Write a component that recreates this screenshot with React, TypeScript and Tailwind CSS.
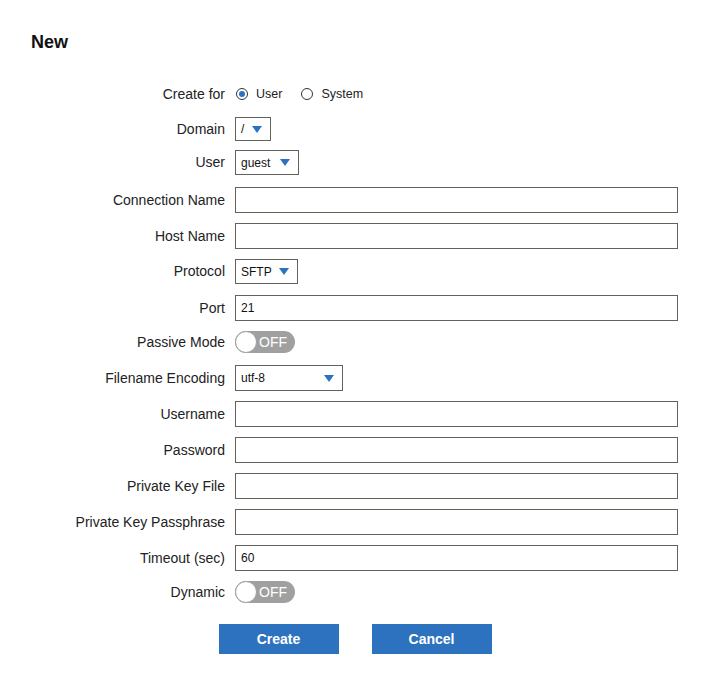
import React from "react"

function Caret() {
  return (
    <svg width="10" height="7" viewBox="0 0 10 7" className="shrink-0">
      <path d="M0 0 H10 L5 7 Z" fill="#2b72c0" />
    </svg>
  )
}

function Row({ label, className = "", children }: { label: string; className?: string; children: React.ReactNode }) {
  return (
    <div className={"flex items-center " + className}>
      <div className="w-[194px] shrink-0 text-right text-[14px] text-[#222]">{label}</div>
      <div className="ml-[10px] flex flex-1 items-center">{children}</div>
    </div>
  )
}

function TextBox({ value = "" }: { value?: string }) {
  return (
    <div className="flex h-[26px] w-full items-center border border-[#62625a] bg-white pl-[5px] text-[12px] text-[#111]">
      {value}
    </div>
  )
}

function Select({ value, width, height = "h-[25px]" }: { value: string; width: string; height?: string }) {
  return (
    <div className={"flex items-center justify-between border border-[#62625a] bg-white pl-[5px] pr-[8px] text-[12px] text-[#111] " + width + " " + height}>
      <span>{value}</span>
      <Caret />
    </div>
  )
}

function Toggle() {
  return (
    <div className="flex h-[22px] w-[60px] items-center rounded-full bg-[#a0a0a0]">
      <div className="h-[22px] w-[22px] rounded-full border border-[#a0a0a0] bg-white" />
      <span className="ml-[2px] text-[14px] text-white">OFF</span>
    </div>
  )
}

function Radio({ checked, label }: { checked?: boolean; label: string }) {
  return (
    <div className="flex items-center">
      <div className="flex h-[12px] w-[12px] items-center justify-center rounded-full border border-[#333]">
        {checked && <div className="h-[6px] w-[6px] rounded-full bg-[#2b72c0]" />}
      </div>
      <span className="ml-[8px] text-[12.5px] text-[#222]">{label}</span>
    </div>
  )
}

export default function App() {
  return (
    <div
      className="h-[684px] w-[710px] bg-white pl-[31px] pr-[32px] pt-[32px]"
      style={{ fontFamily: '"Liberation Sans", Arial, sans-serif' }}
    >
      <h1 className="text-[18px] font-bold leading-[21px] text-[#111]">New</h1>

      <div className="mt-[30px] flex flex-col gap-[10px]">
        <Row label="Create for" className="h-[22px]">
          <div className="ml-[1px] flex items-center gap-[19px]">
            <Radio checked label="User" />
            <Radio label="System" />
          </div>
        </Row>
        <Row label="Domain" className="mt-[2px]">
          <Select value="/" width="w-[36px]" height="h-[24px]" />
        </Row>
        <Row label="User" className="-mt-[1px]">
          <Select value="guest" width="w-[64px]" />
        </Row>
        <Row label="Connection Name" className="mt-[2px]">
          <TextBox />
        </Row>
        <Row label="Host Name">
          <TextBox />
        </Row>
        <Row label="Protocol">
          <Select value="SFTP" width="w-[63px]" />
        </Row>
        <Row label="Port" className="mt-[1px]">
          <TextBox value="21" />
        </Row>
        <Row label="Passive Mode" className="mb-[2px]">
          <Toggle />
        </Row>
        <Row label="Filename Encoding">
          <Select value="utf-8" width="w-[108px]" height="h-[26px]" />
        </Row>
        <Row label="Username">
          <TextBox />
        </Row>
        <Row label="Password">
          <TextBox />
        </Row>
        <Row label="Private Key File">
          <TextBox />
        </Row>
        <Row label="Private Key Passphrase">
          <TextBox />
        </Row>
        <Row label="Timeout (sec)">
          <TextBox value="60" />
        </Row>
        <Row label="Dynamic">
          <Toggle />
        </Row>
      </div>

      <div className="-ml-[31px] -mr-[32px] mt-[21px] flex justify-center gap-[33px]">
        <button className="h-[30px] w-[120px] bg-[#2d72bf] text-[14px] font-bold text-white">Create</button>
        <button className="h-[30px] w-[120px] bg-[#2d72bf] text-[14px] font-bold text-white">Cancel</button>
      </div>
    </div>
  )
}
